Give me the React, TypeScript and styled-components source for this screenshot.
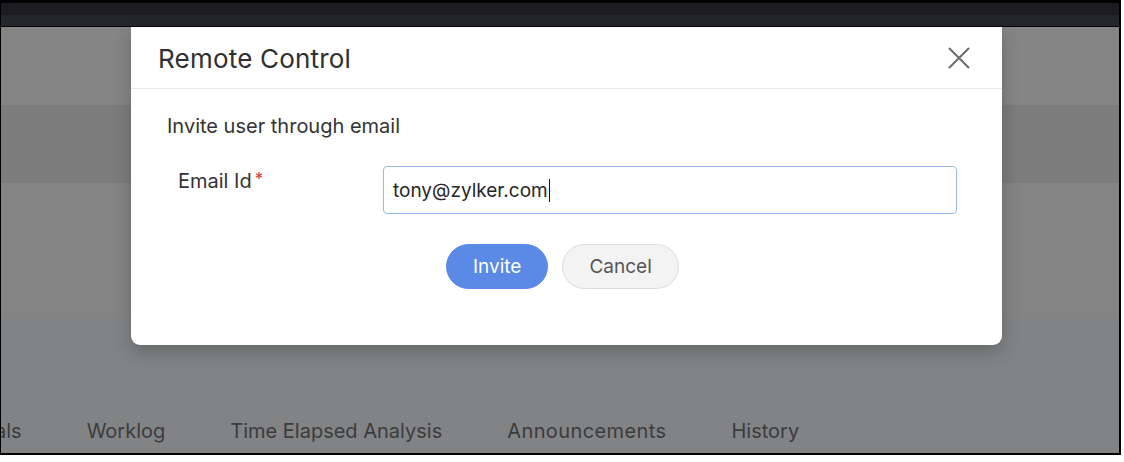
import * as React from 'react';
import styled, { createGlobalStyle } from 'styled-components';

const GlobalStyle = createGlobalStyle`
  html, body {
    margin: 0;
    padding: 0;
    background: #ffffff;
  }
  body {
    font-family: Inter, "Open Sans", Arial, sans-serif;
    -webkit-font-smoothing: antialiased;
  }
`;

const tabs = ['als', 'Worklog', 'Time Elapsed Analysis', 'Announcements', 'History'];

export default function App() {
  return (
    <>
      <GlobalStyle />
      <Frame>
        <TopBar>
          <TopBand />
          <TopBand $shade="#25252c" />
        </TopBar>
        <Backdrop>
          <Stripe $h={78} $bg="#858585" />
          <Stripe $h={78} $bg="#7c7c7c" />
          <Stripe $h={134} $bg="#848484" />
          <TabStrip>
            {tabs.map((t) => (
              <Tab key={t}>{t}</Tab>
            ))}
          </TabStrip>

          <Modal>
            <ModalHeader>
              <Title>Remote Control</Title>
              <CloseButton aria-label="Close">
                <svg width="22" height="22" viewBox="0 0 22 22">
                  <path d="M1.5 1.5 L20.5 20.5 M20.5 1.5 L1.5 20.5" stroke="#6b6d70" strokeWidth="2" strokeLinecap="round" />
                </svg>
              </CloseButton>
            </ModalHeader>
            <ModalBody>
              <Subtitle>Invite user through email</Subtitle>
              <FormRow>
                <Label>
                  Email Id<Required>*</Required>
                </Label>
                <EmailField>
                  tony@zylker.com<Caret />
                </EmailField>
              </FormRow>
              <Actions>
                <PillButton $primary>Invite</PillButton>
                <PillButton>Cancel</PillButton>
              </Actions>
            </ModalBody>
          </Modal>
        </Backdrop>
      </Frame>
    </>
  );
}

const Frame = styled.div`
  width: 1118px;
  height: 450px;
  border-style: solid;
  border-color: #000;
  border-width: 3px 2px 2px 1px;
  display: flex;
  flex-direction: column;
  overflow: hidden;
`;

const TopBar = styled.header`
  display: flex;
  flex-direction: column;
  border-bottom: 1px solid #050507;
`;

const TopBand = styled.div<{ $shade?: string }>`
  height: 12px;
  background: ${(p) => p.$shade || '#1c1c21'};
  &:last-child {
    height: 11px;
  }
`;

const Backdrop = styled.main`
  position: relative;
  flex: 1;
  display: flex;
  flex-direction: column;
  background: #818384;
`;

const Stripe = styled.div<{ $h: number; $bg: string }>`
  height: ${(p) => p.$h}px;
  background: ${(p) => p.$bg};
`;

const TabStrip = styled.nav`
  flex: 1;
  display: flex;
  align-items: flex-end;
  gap: 65px;
  padding: 0 0 10px 0;
  margin-left: -6px;
`;

const Tab = styled.span`
  font-size: 20px;
  color: #3c3c3e;
  &:nth-child(4) {
    letter-spacing: 0.4px;
  }
`;

const Modal = styled.section`
  position: absolute;
  top: 0;
  left: 130px;
  width: 871px;
  height: 318px;
  background: #fff;
  border-radius: 0 0 9px 9px;
  box-shadow: 0 6px 18px rgba(0, 0, 0, 0.22);
  display: flex;
  flex-direction: column;
`;

const ModalHeader = styled.div`
  height: 61px;
  display: flex;
  align-items: center;
  justify-content: space-between;
  padding: 0 32px 0 27px;
  border-bottom: 1px solid #e9e9e9;
`;

const Title = styled.h2`
  margin: 0 0 -1px;
  font-size: 26px;
  font-weight: 400;
  color: #2f2f31;
  letter-spacing: 0.2px;
`;

const CloseButton = styled.button`
  border: 0;
  background: none;
  padding: 0;
  display: flex;
  cursor: pointer;
`;

const ModalBody = styled.div`
  padding: 24px 45px 0 36px;
  display: flex;
  flex-direction: column;
`;

const Subtitle = styled.p`
  margin: 0;
  font-size: 20px;
  color: #333335;
  line-height: 26px;
`;

const FormRow = styled.div`
  display: flex;
  align-items: flex-start;
  margin-top: 27px;
`;

const Label = styled.label`
  width: 205px;
  padding: 3px 0 0 11px;
  font-size: 20px;
  color: #333335;
`;

const Required = styled.span`
  color: #e5302c;
  margin-left: 3px;
  font-size: 17px;
  vertical-align: 3px;
`;

const EmailField = styled.div`
  flex: 1;
  height: 48px;
  box-sizing: border-box;
  border: 1px solid #9bb8ee;
  border-radius: 4px;
  display: flex;
  align-items: center;
  padding: 0 9px;
  font-size: 19px;
  color: #262628;
`;

const Caret = styled.span`
  display: inline-block;
  width: 1px;
  height: 23px;
  background: #111;
  margin-left: 1px;
`;

const Actions = styled.div`
  display: flex;
  gap: 14px;
  margin: 30px 0 0 279px;
`;

const PillButton = styled.button<{ $primary?: boolean }>`
  height: 45px;
  padding: 0 26px;
  border-radius: 23px;
  font-family: inherit;
  font-size: 19px;
  cursor: pointer;
  border: 1px solid ${(p) => (p.$primary ? '#5a89e6' : '#dcdcdc')};
  background: ${(p) => (p.$primary ? '#5a89e6' : '#f3f3f3')};
  color: ${(p) => (p.$primary ? '#ffffff' : '#555557')};
`;
